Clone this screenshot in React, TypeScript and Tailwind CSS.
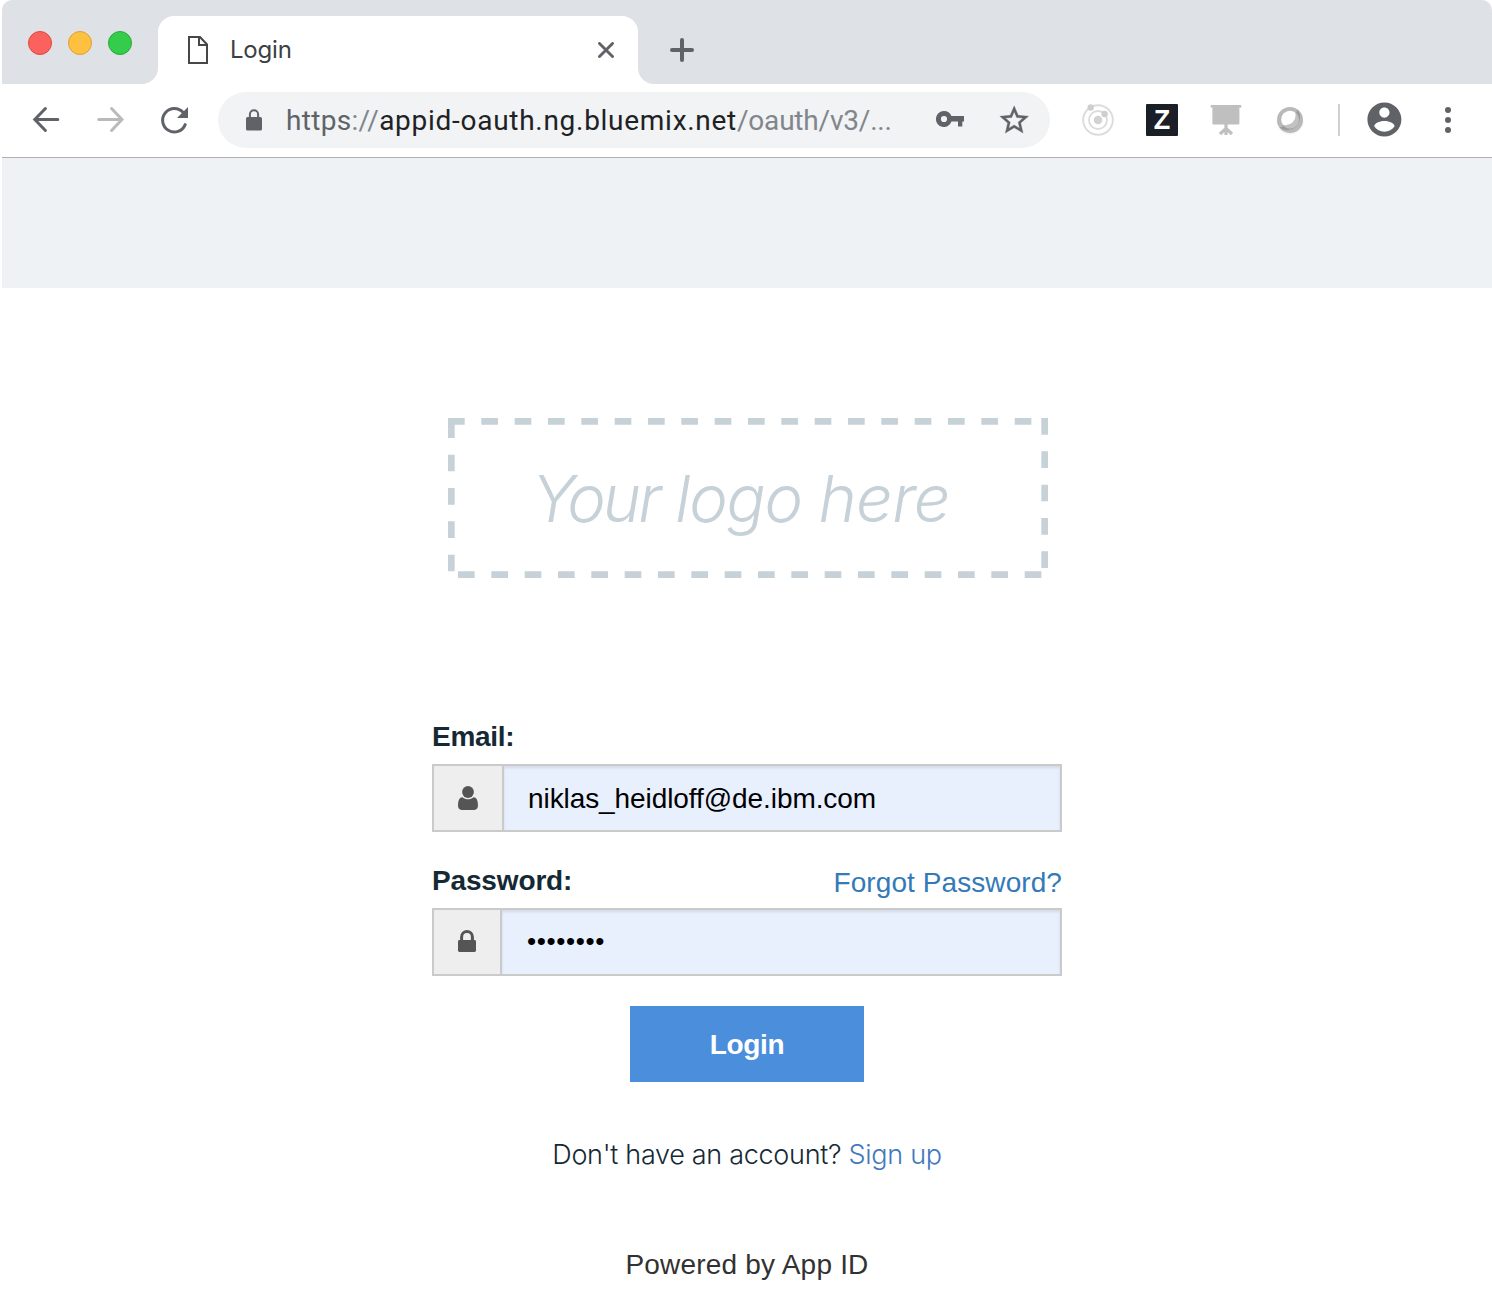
import type { ReactNode } from "react";

function TrafficLights() {
  return (
    <div className="flex gap-4 pt-[31px] pl-[26px] w-[156px]">
      <span className="size-6 rounded-full border border-[#e2463f] bg-[#fc625d]" />
      <span className="size-6 rounded-full border border-[#dfa032] bg-[#fdc041]" />
      <span className="size-6 rounded-full border border-[#27aa35] bg-[#35cc4b]" />
    </div>
  );
}

function Tab() {
  return (
    <div className="relative mt-4 flex h-[68px] w-[480px] items-center rounded-t-2xl bg-white pl-[30px] pr-6">
      <span className="absolute bottom-0 -left-4 size-4 bg-white">
        <span className="block size-4 rounded-br-2xl bg-[#dee1e6]" />
      </span>
      <span className="absolute bottom-0 -right-4 size-4 bg-white">
        <span className="block size-4 rounded-bl-2xl bg-[#dee1e6]" />
      </span>
      <svg className="h-7 w-5" viewBox="0 0 20 28" fill="none" stroke="#474747" strokeWidth="2">
        <path d="M1 1H12L19 8.5V27H1Z" />
        <path d="M11 1V9H19" />
      </svg>
      <span className="ml-[22px] flex-1 font-['Inter',sans-serif] text-[24px] leading-8 tracking-[-0.2px] text-[#3c4043]">Login</span>
      <svg className="size-4" viewBox="0 0 16 16" stroke="#5f6368" strokeWidth="2.9" strokeLinecap="round">
        <path d="M1.5 1.5L14.5 14.5M14.5 1.5L1.5 14.5" />
      </svg>
    </div>
  );
}

function AddressBar() {
  return (
    <div className="ml-7 flex h-14 w-[832px] items-center rounded-full bg-[#f1f3f4] pl-7">
      <svg className="h-[22px] w-4" viewBox="0 0 16 22">
        <rect x="0" y="8" width="16" height="13.5" rx="1.6" fill="#5f6368" />
        <path d="M3.9 9V5.3a4.1 4.1 0 0 1 8.2 0V9" fill="none" stroke="#5f6368" strokeWidth="2" />
      </svg>
      <div className="ml-6 w-[650px] pt-px whitespace-nowrap font-['Roboto',sans-serif] text-[28px] leading-9 text-[#80868b]">
        <span className="tracking-[0.3px] text-[#5f6368]">https</span>
        <span className="tracking-[0.3px]">://</span>
        <span className="tracking-[0.72px] text-[#202124]">appid-oauth.ng.bluemix.net</span>
        <span className="tracking-[-0.2px]">/oauth/v3/...</span>
      </div>
      <svg className="-mt-0.5 h-4 w-7" viewBox="0 0 28 16" fill="#5f6368">
        <path fillRule="evenodd" d="M8 0a8 8 0 1 0 7.5 10.5H22V15.5h4.3V10.5H28V5H15.4A8 8 0 0 0 8 0ZM8 4.9a3.1 3.1 0 1 1 0 6.2a3.1 3.1 0 0 1 0-6.2Z" />
      </svg>
      <svg className="mt-px ml-[33px] size-[34.4px]" viewBox="0 0 24 24" fill="#5f6368" stroke="#5f6368" strokeWidth="0.25">
        <path d="M22 9.24l-7.19-.62L12 2 9.19 8.63 2 9.24l5.46 4.73L5.82 21 12 17.27 18.18 21l-1.63-7.03L22 9.24zM12 15.4l-3.76 2.27 1-4.28-3.32-2.88 4.38-.38L12 6.1l1.71 4.04 4.38.38-3.32 2.88 1 4.28L12 15.4z" />
      </svg>
    </div>
  );
}

function Extensions() {
  return (
    <div className="flex items-center">
      <svg className="ml-8 size-8" viewBox="0 0 32 32" fill="none" stroke="#dcdcdc" strokeWidth="1.9">
        <circle cx="16" cy="16" r="14.8" />
        <circle cx="16" cy="16" r="9" />
        <circle cx="16" cy="16" r="4.3" fill="#d2d2d2" stroke="none" />
        <circle cx="8.7" cy="3.5" r="3.2" fill="#cecece" stroke="none" />
        <circle cx="22.6" cy="10" r="3.2" fill="#cecece" stroke="none" />
      </svg>
      <span className="ml-8 flex size-8 items-center justify-center rounded-[1px] bg-[#1b1f28] font-['Liberation_Sans',sans-serif] text-[27px] leading-8 font-bold text-white">
        Z
      </span>
      <svg className="ml-8 size-8" viewBox="0 0 32 32" fill="#bfbfbf" stroke="#bfbfbf">
        <rect x="0.7" y="1" width="30.6" height="2.6" stroke="none" />
        <rect x="2.4" y="3" width="27" height="17.6" rx="1" stroke="none" />
        <path d="M16 20V31M15.5 24.8L10 30M16.5 24.8L22 30" fill="none" strokeWidth="3.2" />
      </svg>
      <svg className="ml-8 size-8" viewBox="0 0 32 32">
        <defs>
          <clipPath id="lens">
            <circle cx="16" cy="15.5" r="8.8" />
          </clipPath>
        </defs>
        <circle cx="16" cy="17.2" r="13.6" fill="#f6f6f6" />
        <circle cx="16" cy="16" r="13" fill="#b9b9b9" />
        <path d="M23.5 5.4A13 13 0 0 1 5.6 23.8L12 21L21 12Z" fill="#9b9b9b" />
        <circle cx="16" cy="15.7" r="9" fill="#c2c2c2" />
        <circle cx="11.6" cy="11.2" r="10" fill="#ffffff" clipPath="url(#lens)" />
      </svg>
      <span className="ml-8 h-8 w-0.5 bg-[#cfd0d2]" />
    </div>
  );
}

function Toolbar() {
  return (
    <div className="flex h-[74px] items-center border-b border-[#aeb0b3] bg-white pb-px pl-[30px]">
      <svg className="h-8 w-7" viewBox="0 0 28 32" fill="none" stroke="#5f6368" strokeWidth="3" strokeLinecap="round">
        <path d="M25.8 15.5H3.4M13.4 4.5L2.8 15.5L13.4 26.5" />
      </svg>
      <svg className="ml-9 h-8 w-7" viewBox="0 0 28 32" fill="none" stroke="#bababb" strokeWidth="3" strokeLinecap="round">
        <path d="M2.7 15.5H25.4M15.6 4.5L26 15.5L15.6 26.5" />
      </svg>
      <svg className="ml-[34px] h-8 w-[32px]" viewBox="0 0 32 32" fill="none" stroke="#5f6368" strokeWidth="3" strokeLinecap="round">
        <path d="M25.2 8.6A11.7 11.7 0 1 0 27.2 20.6" />
        <path d="M30 3V14H19Z" fill="#5f6368" stroke="none" />
      </svg>
      <AddressBar />
      <Extensions />
      <svg className="-mt-px ml-[23.6px] size-[40.8px]" viewBox="0 0 24 24" fill="#5f6368">
        <path d="M12 2C6.48 2 2 6.48 2 12s4.48 10 10 10 10-4.48 10-10S17.52 2 12 2zm0 3c1.66 0 3 1.34 3 3s-1.34 3-3 3-3-1.34-3-3 1.34-3 3-3zm0 14.2c-2.5 0-4.71-1.28-6-3.22.03-1.99 4-3.08 6-3.08 1.99 0 5.97 1.09 6 3.08-1.29 1.94-3.5 3.22-6 3.22z" />
      </svg>
      <div className="ml-[40.6px] flex flex-col gap-1">
        <span className="size-1.5 rounded-full bg-[#5f6368]" />
        <span className="size-1.5 rounded-full bg-[#5f6368]" />
        <span className="size-1.5 rounded-full bg-[#5f6368]" />
      </div>
    </div>
  );
}

function LogoPlaceholder() {
  return (
    <div className="relative mt-[130px] ml-4 flex h-40 w-[600px] items-center">
      <svg className="absolute inset-0 h-40 w-[600px]" viewBox="0 0 600 160" fill="none" stroke="#c6d1d8" strokeWidth="6.67" strokeDasharray="16.67 16.665">
        <path d="M0 3.33H590" />
        <path d="M596.67 0V153" />
        <path d="M10 156.67H593.4" />
        <path d="M3.33 3.3V153.4" />
      </svg>
      <span className="ml-[84px] pt-px font-['Inter',sans-serif] text-[65px] font-[350] italic tracking-[-1.7px] whitespace-nowrap text-[#c6d1d8]">
        <span className="tracking-[-3px]">Your</span> <span className="tracking-[-1.2px]">logo</span>{" "}
        <span className="tracking-[-0.7px]">here</span>
      </span>
    </div>
  );
}

function Field({ icon, addon, children }: { icon: ReactNode; addon: string; children: ReactNode }) {
  return (
    <div className="flex h-[68px] w-[630px] border-2 border-[#cacaca]">
      <span className={`flex items-center justify-center border-r-2 border-[#cacaca] bg-[#eeeeee] ${addon}`}>{icon}</span>
      <span className="flex flex-1 items-center bg-[#e8effd] pl-6 leading-9 text-black shadow-[inset_0_2px_3px_rgba(0,0,0,0.09)]">{children}</span>
    </div>
  );
}

export default function App() {
  return (
    <div className="h-[1304px] overflow-hidden bg-white pl-0.5">
      <div className="flex h-[84px] rounded-t-[10px] bg-[#dee1e6]">
        <TrafficLights />
        <Tab />
        <svg className="mt-[38px] ml-8 size-6" viewBox="0 0 24 24" stroke="#5f6368" strokeWidth="4" strokeLinecap="round">
          <path d="M12 2V22M2 12H22" />
        </svg>
      </div>
      <Toolbar />
      <div className="h-[130px] bg-[#eef2f5]" />
      <main className="ml-[430px] flex w-[630px] flex-col font-['Liberation_Sans',sans-serif] text-[28px]">
        <LogoPlaceholder />
        <label className="mt-[139px] mb-[7px] leading-10 font-bold tracking-[-0.3px] text-[#152935]">Email:</label>
        <Field
          addon="w-[70px]"
          icon={
            <svg className="h-6 w-5" viewBox="0 0 20 24" fill="#555555">
              <circle cx="10" cy="6" r="5.9" />
              <path d="M4.6 11.2C6 12.6 8 13.3 10 13.3S14 12.6 15.4 11.2C18.6 11.2 20 14.7 20 19.6C20 22.3 18.6 24 16.4 24H3.6C1.4 24 0 22.3 0 19.6C0 14.7 1.4 11.2 4.6 11.2Z" />
            </svg>
          }
        >
          <span className="pt-px tracking-[-0.08px]">niklas_heidloff@de.ibm.com</span>
        </Field>
        <div className="mt-[29px] mb-[7px] flex justify-between leading-10">
          <span className="font-bold tracking-[-0.15px] text-[#152935]">Password:</span>
          <a className="-mb-0.5 pt-0.5 tracking-[0.08px] text-[#337ab7]">Forgot Password?</a>
        </div>
        <Field
          addon="w-[68px]"
          icon={
            <svg className="-mt-0.5 h-[22px] w-[18px]" viewBox="0 0 18 22" fill="#555555">
              <rect y="10" width="18" height="12" rx="1.4" />
              <path d="M3.6 11V7a5.4 5.4 0 0 1 10.8 0V11" fill="none" stroke="#555555" strokeWidth="3" />
            </svg>
          }
        >
          <span className="pb-0.5 pl-px text-[26px] tracking-[0.65px]">••••••••</span>
        </Field>
        <button className="mt-[30px] h-[76px] w-[234px] self-center bg-[#4b8edc] pt-px font-bold tracking-[-0.3px] text-white">Login</button>
        <p className="mt-[53px] text-center font-['Inter',sans-serif] text-[27px] leading-10 font-light tracking-[-0.3px] whitespace-nowrap text-[#152935]">
          Don't have an account? <a className="text-[#4178be]">Sign up</a>
        </p>
        <p className="mt-[70px] text-center leading-10 tracking-[0.2px] text-[#323232]">Powered by App ID</p>
      </main>
    </div>
  );
}
